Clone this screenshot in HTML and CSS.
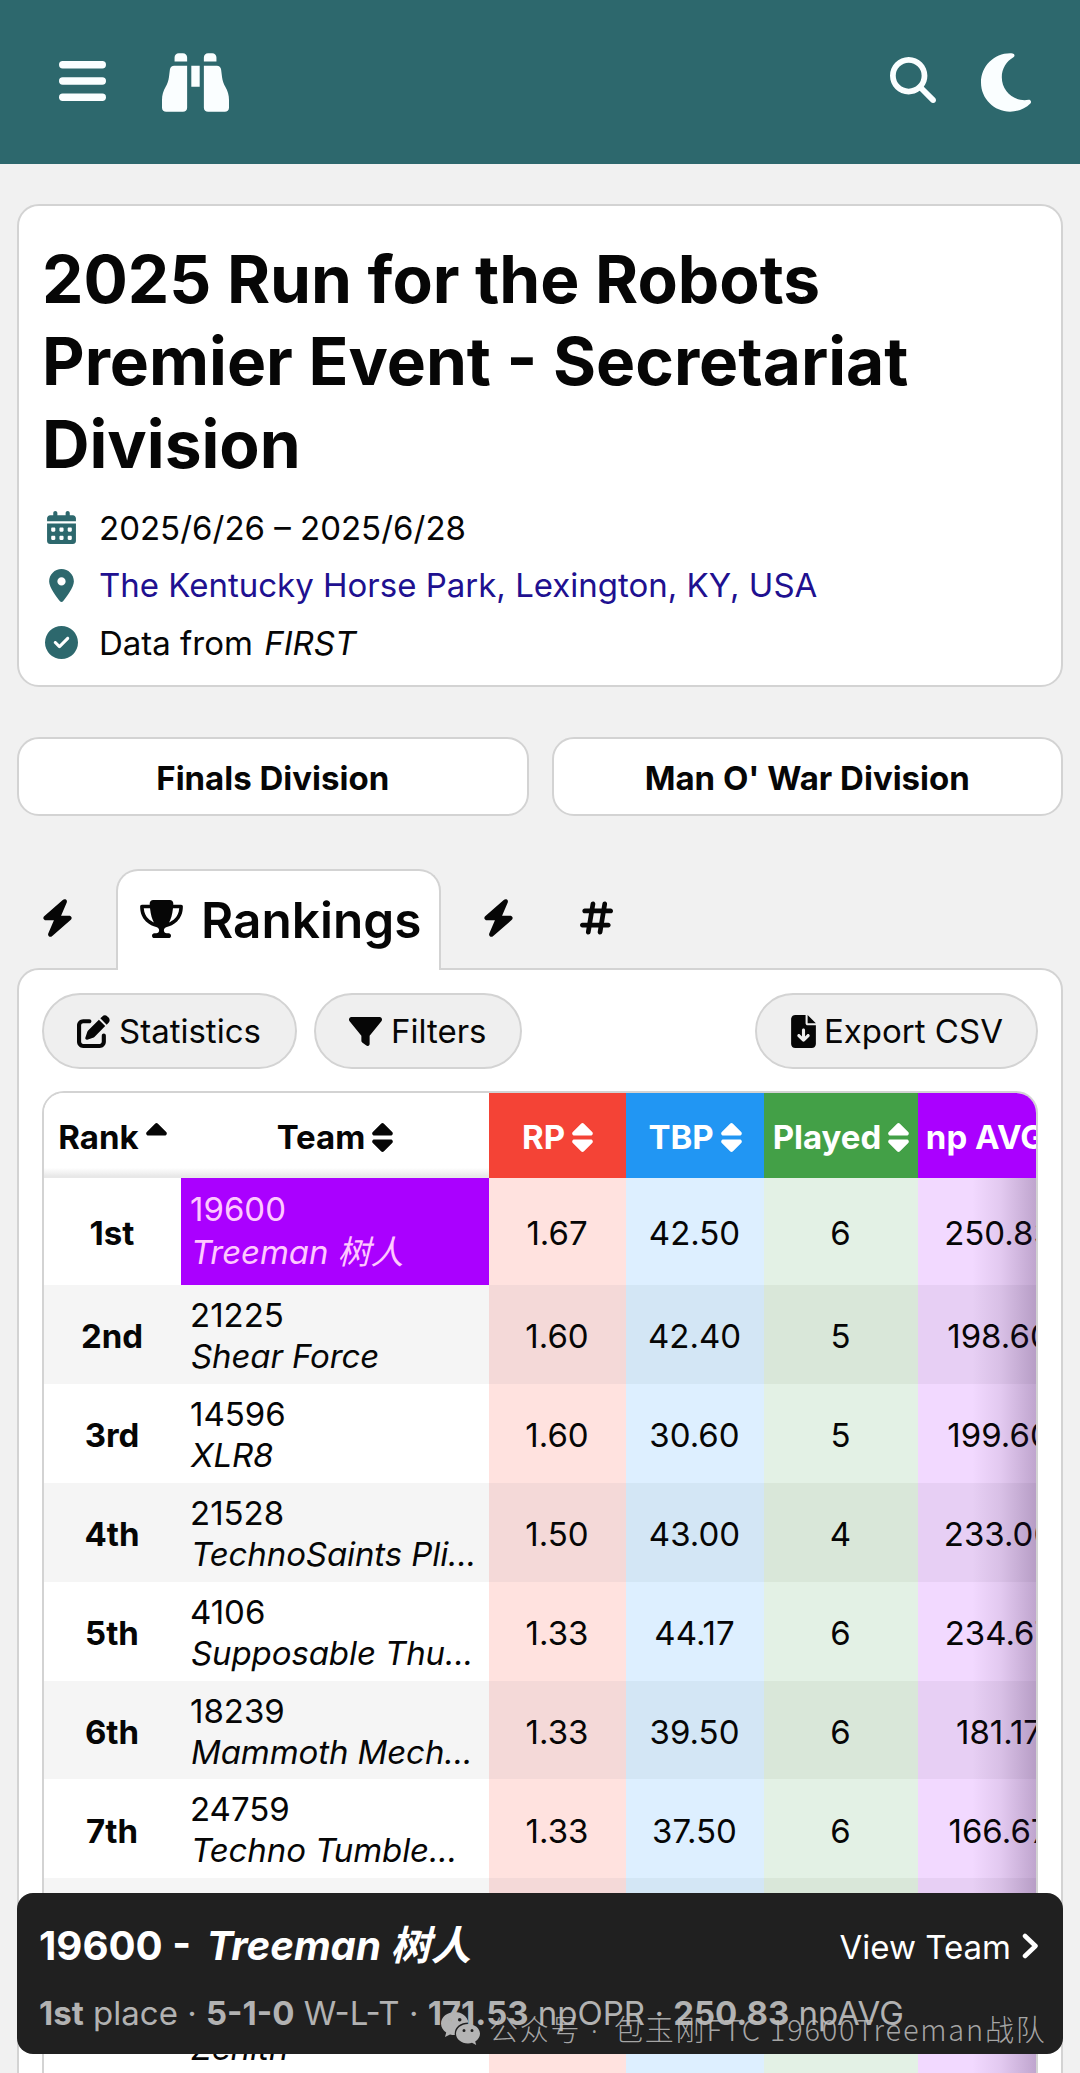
FILE: index.html
```html
<!DOCTYPE html>
<html lang="en">
<head>
<meta charset="utf-8">
<title>2025 Run for the Robots Premier Event - Secretariat Division</title>
<link rel="stylesheet" href="styles.css">
</head>
<body>
<svg class="sprite" aria-hidden="true">
  <symbol id="sort" viewBox="0 0 320 512"><path d="M137.4 41.4c12.5-12.5 32.8-12.5 45.3 0l128 128c9.2 9.2 11.9 22.9 6.9 34.9s-16.6 19.8-29.6 19.8L32 224c-12.9 0-24.6-7.8-29.6-19.8s-2.2-25.7 6.9-34.9l128-128zm0 429.3l-128-128c-9.2-9.2-11.9-22.9-6.9-34.9s16.6-19.8 29.6-19.8l256 0c12.9 0 24.6 7.8 29.6 19.8s2.2 25.7-6.9 34.9l-128 128c-12.5 12.5-32.8 12.5-45.3 0z"/></symbol>
  <symbol id="sort-up" viewBox="0 0 320 512"><path d="M137.4 41.4c12.5-12.5 32.8-12.5 45.3 0l128 128c9.2 9.2 11.9 22.9 6.9 34.9s-16.6 19.8-29.6 19.8L32 224c-12.9 0-24.6-7.8-29.6-19.8s-2.2-25.7 6.9-34.9l128-128z"/></symbol>
  <symbol id="bolt" viewBox="0 0 448 512"><path d="M349.4 44.6c5.9-13.7 1.5-29.7-10.6-38.5s-28.6-8-39.9 1.8l-256 224c-10 8.8-13.6 22.9-8.9 35.3S50.7 288 64 288l111.5 0L98.6 467.4c-5.9 13.7-1.5 29.7 10.6 38.5s28.6 8 39.9-1.8l256-224c10-8.8 13.6-22.9 8.9-35.3s-16.6-20.7-30-20.7l-111.5 0L349.4 44.6z"/></symbol>
</svg>

<header class="navbar">
  <div class="nav-group">
    <svg class="nav-menu" viewBox="0 0 47 40"><rect width="47" height="7.4" rx="3.7"/><rect y="16.3" width="47" height="7.4" rx="3.7"/><rect y="32.6" width="47" height="7.4" rx="3.7"/></svg>
    <svg class="nav-logo" viewBox="0 0 512 512"><path d="M128 32l32 0c17.700 0 32 14.300 32 32l0 32L96 96l0-32c0-17.700 14.300-32 32-32zm64 96l0 320c0 17.700-14.300 32-32 32L32 480c-17.700 0-32-14.300-32-32l0-59.100c0-34.600 9.400-68.600 27.200-98.300C40.900 267.800 49.700 242.400 53 216L60.500 156c2-16 15.600-28 31.800-28l99.800 0zm227.800 0c16.100 0 29.800 12 31.800 28L459 216c3.300 26.400 12.100 51.800 25.800 74.600c17.800 29.700 27.200 63.700 27.200 98.300l0 59.100c0 17.700-14.300 32-32 32l-128 0c-17.700 0-32-14.300-32-32l0-320 99.800 0zM320 64c0-17.700 14.300-32 32-32l32 0c17.700 0 32 14.300 32 32l0 32-96 0 0-32zm-32 64l0 160-64 0 0-160 64 0z"/></svg>
  </div>
  <div class="nav-group nav-right">
    <svg class="nav-search" viewBox="0 0 512 512"><path d="M416 208c0 45.900-14.900 88.300-40 122.700L502.600 457.400c12.500 12.500 12.500 32.800 0 45.300s-32.800 12.500-45.300 0L330.700 376c-34.400 25.200-76.800 40-122.700 40C93.100 416 0 322.900 0 208S93.100 0 208 0S416 93.100 416 208zM208 352a144 144 0 1 0 0-288 144 144 0 1 0 0 288z"/></svg>
    <svg class="nav-moon" viewBox="0 0 384 512"><path d="M223.500 32C100 32 0 132.300 0 256S100 480 223.500 480c60.600 0 115.500-24.200 155.800-63.400c5-4.900 6.300-12.500 3.100-18.700s-10.100-9.700-17-8.500c-9.800 1.700-19.800 2.600-30.100 2.600c-96.900 0-175.500-78.800-175.500-176c0-65.800 36-123.100 89.300-153.300c6.100-3.500 9.200-10.500 7.700-17.300s-7.300-11.900-14.300-12.500c-6.300-.5-12.600-.8-19-.8z"/></svg>
  </div>
</header>

<main class="content">
  <section class="card event">
    <h1 class="event-title">2025 Run for the Robots<br>Premier Event - Secretariat<br>Division</h1>
    <div class="info"><svg class="info-icon" viewBox="-32 0 512 512"><path d="M128 0c17.700 0 32 14.300 32 32l0 32 128 0 0-32c0-17.700 14.300-32 32-32s32 14.300 32 32l0 32 48 0c26.500 0 48 21.500 48 48l0 48L0 160l0-48C0 85.500 21.500 64 48 64l48 0 0-32c0-17.700 14.300-32 32-32zM0 192l448 0 0 272c0 26.500-21.500 48-48 48L48 512c-26.500 0-48-21.500-48-48L0 192zm64 80l0 32c0 8.800 7.200 16 16 16l32 0c8.800 0 16-7.200 16-16l0-32c0-8.800-7.200-16-16-16l-32 0c-8.800 0-16 7.200-16 16zm128 0l0 32c0 8.800 7.200 16 16 16l32 0c8.800 0 16-7.200 16-16l0-32c0-8.800-7.200-16-16-16l-32 0c-8.800 0-16 7.200-16 16zm144-16c-8.800 0-16 7.200-16 16l0 32c0 8.800 7.200 16 16 16l32 0c8.800 0 16-7.200 16-16l0-32c0-8.800-7.200-16-16-16l-32 0zM64 400l0 32c0 8.800 7.200 16 16 16l32 0c8.800 0 16-7.200 16-16l0-32c0-8.800-7.200-16-16-16l-32 0c-8.800 0-16 7.200-16 16zm144-16c-8.800 0-16 7.200-16 16l0 32c0 8.800 7.200 16 16 16l32 0c8.800 0 16-7.200 16-16l0-32c0-8.800-7.200-16-16-16l-32 0zm112 16l0 32c0 8.800 7.200 16 16 16l32 0c8.800 0 16-7.200 16-16l0-32c0-8.800-7.200-16-16-16l-32 0c-8.800 0-16 7.200-16 16z"/></svg><span>2025/6/26 – 2025/6/28</span></div>
    <div class="info"><svg class="info-icon" viewBox="-64 0 512 512"><path d="M215.700 499.200C267 435 384 279.400 384 192C384 86 298 0 192 0S0 86 0 192c0 87.400 117 243 168.300 307.200c12.300 15.300 35.100 15.300 47.400 0zM192 128a64 64 0 1 1 0 128 64 64 0 1 1 0-128z"/></svg><a class="venue">The Kentucky Horse Park, Lexington, KY, USA</a></div>
    <div class="info"><svg class="info-icon" viewBox="0 0 512 512"><path d="M256 512A256 256 0 1 0 256 0a256 256 0 1 0 0 512zM369 209L241 337c-9.400 9.400-24.600 9.400-33.900 0l-64-64c-9.400-9.400-9.400-24.600 0-33.900s24.600-9.400 33.900 0l47 47L335 175c9.400-9.400 24.600-9.400 33.900 0s9.400 24.600 0 33.900z"/></svg><span>Data from <em class="source">FIRST</em></span></div>
  </section>

  <nav class="divisions">
    <a class="card division">Finals Division</a>
    <a class="card division">Man O' War Division</a>
  </nav>

  <div class="tabs">
    <div class="tab tab-bolt"><svg class="tab-icon"><use href="#bolt"/></svg></div>
    <div class="tab tab-active">
      <svg class="trophy" viewBox="0 0 576 512"><path d="M400 0L176 0c-26.500 0-48.100 21.800-47.100 48.200c.2 5.300 .4 10.600 .7 15.800L24 64C10.700 64 0 74.700 0 88c0 92.600 33.500 157 78.500 200.700c44.300 43.100 98.300 64.800 138.100 75.800c23.400 6.500 39.400 26 39.400 45.600c0 20.900-17 37.900-37.900 37.900L192 448c-17.700 0-32 14.300-32 32s14.300 32 32 32l192 0c17.700 0 32-14.300 32-32s-14.300-32-32-32l-26.100 0C337 448 320 431 320 410.100c0-19.600 15.900-39.200 39.400-45.600c39.900-11 93.900-32.700 138.200-75.800C542.500 245 576 180.600 576 88c0-13.300-10.700-24-24-24L446.400 64c.3-5.200 .5-10.400 .7-15.800C448.100 21.800 426.500 0 400 0zM48.900 112l84.400 0c9.100 90.100 29.200 150.300 51.900 190.600c-24.900-11-50.800-26.500-73.200-48.300c-32-31.100-58-76-63-142.300zM464.100 254.300c-22.400 21.800-48.300 37.300-73.200 48.300c22.700-40.300 42.800-100.500 51.900-190.600l84.400 0c-5.100 66.300-31.100 111.200-63 142.300z"/></svg>
      <span class="tab-label">Rankings</span>
    </div>
    <div class="tab tab-bolt2"><svg class="tab-icon"><use href="#bolt"/></svg></div>
    <div class="tab tab-hash"><svg class="tab-icon" viewBox="0 0 448 512"><path d="M181.300 32.400c17.400 2.900 29.200 19.400 26.300 36.800L197.800 128l95.100 0 11.500-69.300c2.900-17.400 19.400-29.200 36.800-26.300s29.200 19.400 26.300 36.800L357.800 128l58.200 0c17.700 0 32 14.300 32 32s-14.300 32-32 32l-68.900 0L325.800 320l58.200 0c17.700 0 32 14.300 32 32s-14.300 32-32 32l-68.900 0-11.500 69.300c-2.900 17.400-19.400 29.200-36.800 26.300s-29.200-19.400-26.300-36.800l9.800-58.700-95.100 0-11.500 69.300c-2.900 17.400-19.400 29.200-36.800 26.300s-29.200-19.400-26.300-36.800L90.200 384 32 384c-17.700 0-32-14.300-32-32s14.300-32 32-32l68.900 0 21.300-128L64 192c-17.700 0-32-14.300-32-32s14.300-32 32-32l68.900 0 11.500-69.300c2.900-17.400 19.400-29.200 36.800-26.300zM187.100 192L165.800 320l95.100 0 21.300-128-95.100 0z"/></svg></div>
  </div>

  <section class="panel">
    <div class="toolbar">
      <button class="pill pill-stats"><svg class="pill-icon" viewBox="0 0 512 512"><path d="M471.600 21.700c-21.900-21.900-57.300-21.900-79.200 0L362.300 51.700l97.900 97.900 30.100-30.100c21.900-21.900 21.900-57.300 0-79.200L471.600 21.700zm-299.200 220c-6.100 6.100-10.800 13.600-13.500 21.900l-29.600 88.800c-2.900 8.600-.6 18.100 5.800 24.600s15.900 8.700 24.600 5.800l88.800-29.600c8.200-2.700 15.700-7.400 21.900-13.500L437.700 172.300 339.700 74.300 172.400 241.700zM96 64C43 64 0 107 0 160L0 416c0 53 43 96 96 96l256 0c53 0 96-43 96-96l0-96c0-17.700-14.300-32-32-32s-32 14.300-32 32l0 96c0 17.700-14.300 32-32 32L96 448c-17.700 0-32-14.300-32-32l0-256c0-17.700 14.300-32 32-32l96 0c17.700 0 32-14.300 32-32s-14.300-32-32-32L96 64z"/></svg><span>Statistics</span></button>
      <button class="pill pill-filter"><svg class="pill-icon" viewBox="0 0 512 512"><path d="M3.900 54.900C10.500 40.900 24.500 32 40 32l432 0c15.500 0 29.500 8.900 36.100 22.900s4.600 30.500-5.200 42.500L320 320.900 320 448c0 12.100-6.800 23.200-17.700 28.600s-23.800 4.300-33.500-3l-64-48c-8.100-6-12.800-15.500-12.800-25.600l0-79.100L9 97.300C-.7 85.400-2.800 68.800 3.900 54.900z"/></svg><span>Filters</span></button>
      <button class="pill pill-export"><svg class="pill-icon file-icon" viewBox="0 0 384 512"><path d="M64 0C28.700 0 0 28.700 0 64L0 448c0 35.300 28.700 64 64 64l256 0c35.300 0 64-28.700 64-64l0-288-128 0c-17.700 0-32-14.300-32-32L224 0 64 0zM256 0l0 128 128 0L256 0zM216 232l0 102.100 31-31c9.400-9.400 24.600-9.400 33.900 0s9.400 24.600 0 33.900l-72 72c-9.400 9.400-24.600 9.400-33.900 0l-72-72c-9.400-9.400-9.400-24.600 0-33.900s24.600-9.400 33.900 0l31 31L168 232c0-13.300 10.700-24 24-24s24 10.700 24 24z"/></svg><span>Export CSV</span></button>
    </div>

    <div class="table-wrap">
      <table class="rankings">
        <colgroup><col class="w-rank"><col class="w-team"><col class="w-stat"><col class="w-tbp"><col class="w-played"><col class="w-avg"></colgroup>
        <thead>
          <tr>
            <th class="plain">Rank<svg class="sort"><use href="#sort-up"/></svg></th>
            <th class="plain">Team<svg class="sort"><use href="#sort"/></svg></th>
            <th class="h-rp">RP<svg class="sort"><use href="#sort"/></svg></th>
            <th class="h-tbp">TBP<svg class="sort"><use href="#sort"/></svg></th>
            <th class="h-played">Played<svg class="sort"><use href="#sort"/></svg></th>
            <th class="h-avg">np AVG<svg class="sort"><use href="#sort"/></svg></th>
          </tr>
        </thead>
        <tbody>
          <tr class="selected"><td class="rank">1st</td><td class="team">19600<em>Treeman 树人</em></td><td class="rp">1.67</td><td class="tbp">42.50</td><td class="played">6</td><td class="avg">250.83</td></tr>
          <tr><td class="rank">2nd</td><td class="team">21225<em>Shear Force</em></td><td class="rp">1.60</td><td class="tbp">42.40</td><td class="played">5</td><td class="avg">198.60</td></tr>
          <tr><td class="rank">3rd</td><td class="team">14596<em>XLR8</em></td><td class="rp">1.60</td><td class="tbp">30.60</td><td class="played">5</td><td class="avg">199.60</td></tr>
          <tr><td class="rank">4th</td><td class="team">21528<em>TechnoSaints Pli...</em></td><td class="rp">1.50</td><td class="tbp">43.00</td><td class="played">4</td><td class="avg">233.00</td></tr>
          <tr><td class="rank">5th</td><td class="team">4106<em>Supposable Thu...</em></td><td class="rp">1.33</td><td class="tbp">44.17</td><td class="played">6</td><td class="avg">234.67</td></tr>
          <tr><td class="rank">6th</td><td class="team">18239<em>Mammoth Mech...</em></td><td class="rp">1.33</td><td class="tbp">39.50</td><td class="played">6</td><td class="avg">181.17</td></tr>
          <tr><td class="rank">7th</td><td class="team">24759<em>Techno Tumble...</em></td><td class="rp">1.33</td><td class="tbp">37.50</td><td class="played">6</td><td class="avg">166.67</td></tr>
          <tr><td class="rank"></td><td class="team"></td><td class="rp"></td><td class="tbp"></td><td class="played"></td><td class="avg"></td></tr>
          <tr><td class="rank"></td><td class="team">&nbsp;<em>Zenith</em></td><td class="rp"></td><td class="tbp"></td><td class="played"></td><td class="avg"></td></tr>
        </tbody>
      </table>
      <div class="scroll-shade"></div>
    </div>
  </section>
</main>

<aside class="team-bar">
  <div class="bar-top">
    <strong class="bar-title">19600 - <em>Treeman 树人</em></strong>
    <span class="bar-link"><span>View Team</span><svg class="chevron" viewBox="0 0 17 26"><path d="M3 3l10.500 10L3 23"/></svg></span>
  </div>
  <div class="bar-stats"><b>1st</b> place · <b>5-1-0</b> W-L-T · <b>171.53</b> npOPR · <b>250.83</b> npAVG</div>
</aside>

<div class="watermark">
  <svg class="wechat" viewBox="0 0 39 33"><path fill-rule="evenodd" d="M14 0C6.300 0 0 5 0 11.500c0 3.700 2 6.900 5.200 9L4 25l5-2.600c1.500.4 3.100.7 4.800.7C13 15.500 19 10.500 27.500 10.500 26.300 4.500 20.800 0 14 0zM9.300 6a1.800 1.800 0 1 1 0 3.600 1.800 1.800 0 0 1 0-3.600zM18.700 6a1.800 1.800 0 1 1 0 3.600 1.800 1.800 0 0 1 0-3.600z"/><path fill-rule="evenodd" d="M27 12c-6.600 0-12 4.300-12 9.700s5.400 9.700 12 9.700c1.400 0 2.800-.2 4-.6l4.200 2.200-1-3.600c2.900-1.800 4.800-4.600 4.800-7.700C39 16.300 33.600 12 27 12zM23 17a1.500 1.500 0 1 1 0 3 1.500 1.500 0 0 1 0-3zM31 17a1.500 1.500 0 1 1 0 3 1.500 1.500 0 0 1 0-3z"/></svg>
  <span class="wm-a">公众号<span class="wm-dot"> ·</span></span><span class="wm-b">包玉刚FTC 19600Treeman战队</span>
</div>
</body>
</html>
```
FILE: styles.css
```css
* { box-sizing: border-box; }

body {
  position: relative;
  width: 1080px;
  height: 2073px;
  margin: 0;
  overflow: hidden;
  background: #f1f1f1;
  color: #060606;
  font-family: Inter, "Noto Sans CJK SC", sans-serif;
  font-size: 33px;
}

svg { display: block; flex: none; fill: currentColor; }
.sprite { position: absolute; width: 0; height: 0; }

.navbar {
  display: flex;
  justify-content: space-between;
  align-items: center;
  height: 164px;
  padding: 0 49px 0 59px;
  background: #2d686d;
  color: #fafeff;
}
.nav-group { display: flex; align-items: center; }
.nav-menu { width: 47px; height: 40px; margin: -2px 56px 0 0; }
.nav-logo { width: 67px; height: 67px; }
.nav-right { gap: 45px; }
.nav-search { width: 46px; height: 46px; margin-top: -5px; }
.nav-moon { width: 50px; height: 67px; }

.content { height: 1909px; padding: 40px 17px 0; overflow: hidden; }
.card {
  border: 2px solid #d3d3d3;
  border-radius: 22px;
  background: #fff;
}

.event { height: 483px; padding: 32px 23px 0; }
.event-title {
  margin: 0 0 14px;
  font-size: 65.800px;
  font-weight: 700;
  line-height: 82.300px;
  white-space: nowrap;
}
.info { display: flex; align-items: center; gap: 21px; height: 57.600px; }
.info-icon { width: 33px; height: 33px; margin-left: 3px; color: #2d686d; }
.venue { color: #201090; }
.source { margin-left: 2px; }

.divisions { display: flex; gap: 23px; margin-top: 50px; }
.division {
  display: flex;
  flex: 1;
  align-items: center;
  justify-content: center;
  height: 79px;
  padding-top: 2px;
  font-weight: 700;
}

.tabs { display: flex; height: 101px; margin-top: 53px; }
.tab { display: flex; align-items: center; padding-bottom: 4px; }
.tab-icon { width: 33px; height: 38px; }
.tab-bolt { width: 99px; padding-left: 24px; }
.tab-active {
  position: relative;
  z-index: 1;
  width: 325px;
  padding-left: 22px;
  gap: 18px;
  border: 2px solid #d3d3d3;
  border-bottom: 0;
  border-radius: 22px 22px 0 0;
  background: #fff;
}
.trophy { width: 43px; height: 38px; }
.tab-label { padding-top: 2px; font-size: 49.500px; font-weight: 600; }
.tab-bolt2 { padding-left: 41px; }
.tab-hash { padding-left: 65px; }

.panel {
  height: 1200px;
  margin-top: -2px;
  padding: 23px 23px 0;
  border: 2px solid #d3d3d3;
  border-radius: 22px;
  background: #fff;
}
.toolbar { display: flex; gap: 17px; }
.pill {
  display: flex;
  align-items: center;
  height: 76px;
  padding: 0;
  border: 2px solid #d3d3d3;
  border-radius: 38px;
  background: #efefef;
  color: #060606;
  font: inherit;
  white-space: nowrap;
}
.pill-icon { width: 33px; height: 33px; margin-right: 9px; }
.file-icon { width: 25px; margin-right: 8px; }
.pill-stats { width: 255px; padding-left: 33px; }
.pill-filter { width: 208px; padding-left: 33px; }
.pill-export { width: 283px; margin-left: auto; padding-left: 34px; }

.table-wrap {
  position: relative;
  height: 1100px;
  margin-top: 22px;
  overflow: hidden;
  border: 2px solid #d3d3d3;
  border-radius: 22px;
}
.rankings {
  width: 1037px;
  table-layout: fixed;
  border-collapse: collapse;
}
.w-rank { width: 137px; }
.w-team { width: 308px; }
.w-stat { width: 137px; }
.w-tbp { width: 138px; }
.w-played { width: 154px; }
.w-avg { width: 163px; }

th, td { padding: 0; text-align: center; }
td { padding: 4px 1px 0 0; }
th { height: 85px; padding-top: 2px; color: #fff; font-weight: 700; white-space: nowrap; }
.sort { display: inline-block; width: 21px; height: 33px; margin-left: 7px; vertical-align: -5px; }
.plain { background: linear-gradient(#fff 88%, #e8e8e8 98%); color: #060606; }
.h-rp { background: #f44336; }
.h-tbp { background: #2196f3; }
.h-played { background: #43a047; }
.h-avg { background: #aa00ff; }

tbody tr { height: 98.900px; }
.selected { height: 107px; }
.rank { background: #fff; font-weight: 700; }
.team { padding: 3px 0 0 9px; background: #fff; text-align: left; line-height: 41px; white-space: nowrap; }
.team em { display: block; padding-left: 1px; letter-spacing: -.1px; }
.rp { background: #ffe2df; }
.tbp { background: #ddefff; }
.played { background: #e3f1e5; }
.avg { background: #f2d9ff; }
tr:nth-child(even) .rank, tr:nth-child(even) .team { background: #f5f5f5; }
tr:nth-child(even) .rp { background: #f4d9d8; }
tr:nth-child(even) .tbp { background: #d3e6f5; }
tr:nth-child(even) .played { background: #d9e7d9; }
tr:nth-child(even) .avg { background: #e7cff4; }
.selected td { padding-top: 2px; }
.selected .team { padding-top: 0; padding-bottom: 2px; background: #aa00ff; color: #ffc8ff; line-height: 43px; }

.scroll-shade {
  position: absolute;
  top: 85px;
  right: 0;
  bottom: 0;
  width: 64px;
  background: linear-gradient(90deg, rgba(40, 10, 60, 0), rgba(40, 10, 60, .08) 45%, rgba(40, 10, 60, .25));
}

.team-bar {
  position: absolute;
  left: 17px;
  top: 1893px;
  width: 1046px;
  height: 161px;
  padding: 24px 24px 0 22px;
  border-radius: 16px;
  background: #202020;
  color: #fff;
  white-space: nowrap;
}
.bar-top { display: flex; justify-content: space-between; align-items: center; height: 56px; }
.bar-title { padding-bottom: 6px; font-size: 40.200px; }
.bar-title em { margin-left: 6px; }
.bar-link { display: flex; align-items: center; gap: 11px; padding-top: 3px; }
.chevron { width: 17px; height: 26px; margin-bottom: 2px; fill: none; stroke: #fff; stroke-width: 4.500; stroke-linecap: round; stroke-linejoin: round; }
.bar-stats { margin-top: 20px; color: #b2b2b2; line-height: 41px; }

.watermark {
  position: absolute;
  left: 441px;
  top: 2008px;
  display: flex;
  align-items: center;
  height: 40px;
  color: rgba(190, 190, 190, .85);
  font-family: "Noto Sans CJK SC", sans-serif;
  font-size: 29px;
  font-weight: 300;
  letter-spacing: 1.800px;
  white-space: nowrap;
}
.wechat { width: 39px; height: 33px; margin-right: 9px; color: #b4b4b4; }
.wm-a { width: 125px; }
.wm-dot { font-family: "Noto Sans", sans-serif; line-height: 1; }
```
